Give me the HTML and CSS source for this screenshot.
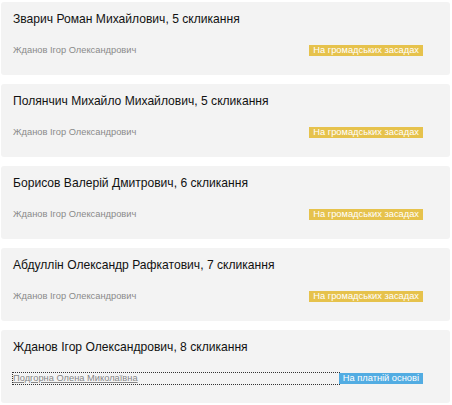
FILE: index.html
```html
<!DOCTYPE html>
<html lang="uk">
<head>
    <meta charset="UTF-8">
    <title>Депутати</title>
    <link rel="stylesheet" href="styles.css">
</head>
<body>

    <div class="list">
        <div class="card">
            <div class="card-title">Зварич Роман Михайлович, 5 скликання</div>
            <div class="card-row">
                <a class="person" href="#">Жданов Ігор Олександрович</a>
                <span class="badge badge-public">На громадських засадах</span>
            </div>
        </div>

        <div class="card">
            <div class="card-title">Полянчич Михайло Михайлович, 5 скликання</div>
            <div class="card-row">
                <a class="person" href="#">Жданов Ігор Олександрович</a>
                <span class="badge badge-public">На громадських засадах</span>
            </div>
        </div>

        <div class="card">
            <div class="card-title">Борисов Валерій Дмитрович, 6 скликання</div>
            <div class="card-row">
                <a class="person" href="#">Жданов Ігор Олександрович</a>
                <span class="badge badge-public">На громадських засадах</span>
            </div>
        </div>

        <div class="card">
            <div class="card-title">Абдуллін Олександр Рафкатович, 7 скликання</div>
            <div class="card-row">
                <a class="person" href="#">Жданов Ігор Олександрович</a>
                <span class="badge badge-public">На громадських засадах</span>
            </div>
        </div>

        <div class="card">
            <div class="card-title">Жданов Ігор Олександрович, 8 скликання</div>
            <div class="card-row">
                <a class="person person-focused" href="#">Подгорна Олена Миколаївна</a>
                <span class="badge badge-paid">На платній основі</span>
            </div>
        </div>
    </div>

</body>
</html>
```

FILE: styles.css
```css
body {
    margin: 0;
    padding: 2px 2px 0 1px;
    font-family: "Liberation Sans", Arial, sans-serif;
    background-color: #ffffff;
    color: #222;
}

.list {
    display: flex;
    flex-direction: column;
    gap: 9px;
}

.card {
    background-color: #f3f3f3;
    border-radius: 3px;
    height: 73px;
    box-sizing: border-box;
    padding: 8px 27px 0 12px;
}

.card-title {
    font-size: 12.1px;
    line-height: 18px;
    color: #111;
}

.card-row {
    display: flex;
    align-items: center;
    margin-top: 17px;
}

.person {
    flex: 1;
    font-size: 9.3px;
    line-height: 11px;
    color: #8a8a8a;
    text-decoration: none;
}

.person-focused {
    outline: 1px dotted #333;
    text-decoration: underline;
    color: #888;
}

.badge {
    font-size: 9.3px;
    line-height: 11px;
    padding: 0 4px;
    color: #fff;
}

.badge-public {
    background-color: #e6c24c;
}

.badge-paid {
    background-color: #52ace2;
}
```
